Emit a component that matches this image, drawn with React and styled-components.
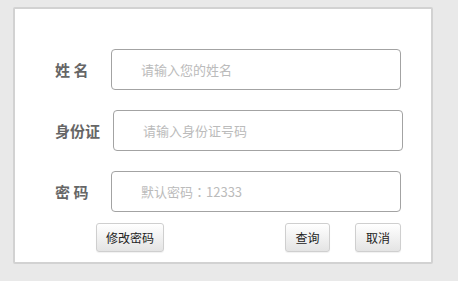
import React from 'react';
import styled, { createGlobalStyle } from 'styled-components';

const GlobalStyle = createGlobalStyle`
  html, body {
    margin: 0;
    padding: 0;
    background: #e9e9e9;
    font-family: "Noto Sans CJK SC", "Liberation Sans", sans-serif;
  }
`;

const Page = styled.div`
  padding: 7px 0 0 13px;
`;

const Panel = styled.form`
  box-sizing: border-box;
  width: 420px;
  height: 257px;
  background: #fff;
  border: 2px solid #d2d2d2;
  border-radius: 2px;
  padding: 40px 30px 0 40px;
  display: flex;
  flex-direction: column;
  gap: 20px;
`;

const Row = styled.div`
  display: flex;
  align-items: center;
`;

const Label = styled.label`
  width: 56px;
  flex-shrink: 0;
  font-size: 15px;
  font-weight: bold;
  color: #666;
  white-space: pre;
  line-height: 20px;
`;

// TC face centres the full-width colon, like the reference
const Field = styled.input`
  box-sizing: border-box;
  flex-shrink: 0;
  width: 290px;
  height: 41px;
  margin-left: ${(p) => p.$shift || 0}px;
  border: 1px solid #a3a3a3;
  border-radius: 4px;
  padding: 0 0 0 29px;
  font-family: ${(p) => (p.$tc ? '"Noto Sans CJK TC", ' : '')}"Noto Sans CJK SC", sans-serif;
  font-size: 13px;
  color: #333;
  outline: none;

  &::placeholder {
    color: #bbb;
  }
`;

const Actions = styled.div`
  display: flex;
  align-items: center;
  margin: -9px 0 0 41px;
`;

const Button = styled.button`
  box-sizing: border-box;
  width: ${(p) => p.$width}px;
  height: 29px;
  margin-left: ${(p) => p.$left || '0'};
  padding: 0;
  border: 1px solid #cfcfcf;
  border-radius: 3px;
  background: linear-gradient(#ffffff, #e4e4e4);
  box-shadow: 0 1px 1px rgba(0, 0, 0, 0.06);
  font-family: inherit;
  font-size: 12px;
  color: #222;
  cursor: pointer;
`;

export default function App() {
  return (
    <Page>
      <GlobalStyle />
      <Panel onSubmit={(e) => e.preventDefault()}>
        <Row>
          <Label>姓 名</Label>
          <Field placeholder="请输入您的姓名" />
        </Row>
        <Row>
          <Label>身份证</Label>
          <Field $shift={2} placeholder="请输入身份证号码" />
        </Row>
        <Row>
          <Label>密 码</Label>
          <Field $tc type="password" placeholder="默认密码：12333" />
        </Row>
        <Actions>
          <Button type="button" $width={68}>修改密码</Button>
          <Button type="submit" $width={45} $left="auto">查询</Button>
          <Button type="button" $width={46} $left="25px">取消</Button>
        </Actions>
      </Panel>
    </Page>
  );
}
